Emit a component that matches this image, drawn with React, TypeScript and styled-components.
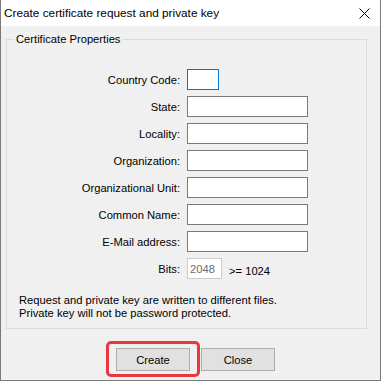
import styled, { createGlobalStyle } from 'styled-components';

const GlobalStyle = createGlobalStyle`
  html, body {
    margin: 0;
    padding: 0;
    background: #ffffff;
  }
  body {
    font-family: 'Segoe UI', 'Liberation Sans', Arial, sans-serif;
    font-size: 11.2px;
    color: #000000;
  }
`;

const fields = [
  { label: 'Country Code:', short: true, focused: true },
  { label: 'State:' },
  { label: 'Locality:' },
  { label: 'Organization:' },
  { label: 'Organizational Unit:' },
  { label: 'Common Name:' },
  { label: 'E-Mail address:' },
];

function App() {
  return (
    <>
      <GlobalStyle />
      <Window>
        <TitleBar>
          <Title>Create certificate request and private key</Title>
          <CloseGlyph aria-label="Close">
            <svg width="11" height="11" viewBox="0 0 11 11">
              <path d="M0.5 0.5 L10.5 10.5 M10.5 0.5 L0.5 10.5" stroke="#000" strokeWidth="1" fill="none" />
            </svg>
          </CloseGlyph>
        </TitleBar>

        <Body>
          <GroupBox>
            <Legend>Certificate Properties</Legend>
            <FormGrid>
              {fields.map((f) => (
                <Row key={f.label}>
                  <Label>{f.label}</Label>
                  <TextBox $short={f.short} $focused={f.focused} />
                </Row>
              ))}
              <Row>
                <Label>Bits:</Label>
                <BitsWrap>
                  <BitsBox disabled value="2048" readOnly />
                  <Hint>&gt;= 1024</Hint>
                </BitsWrap>
              </Row>
            </FormGrid>
            <Note>
              Request and private key are written to different files.
              <br />
              Private key will not be password protected.
            </Note>
          </GroupBox>

          <ButtonRow>
            <DialogButton $marked>Create</DialogButton>
            <DialogButton>Close</DialogButton>
          </ButtonRow>
        </Body>
      </Window>
    </>
  );
}

const Window = styled.div`
  width: 381px;
  height: 381px;
  box-sizing: border-box;
  border: 1px solid #7a7a7a;
  border-top: none;
  background: #f0f0f0;
  display: flex;
  flex-direction: column;
`;

const TitleBar = styled.div`
  height: 26px;
  flex: none;
  background: #ffffff;
  display: flex;
  align-items: center;
  justify-content: space-between;
  padding: 0 10px 0 3px;
`;

const Title = styled.span`
  font-size: 11.8px;
  line-height: 16px;
`;

const CloseGlyph = styled.span`
  display: flex;
  width: 11px;
  height: 11px;
  margin-top: 1px;
`;

const Body = styled.div`
  padding: 5px 13px 0 5px;
  display: flex;
  flex-direction: column;
`;

const GroupBox = styled.fieldset`
  margin: 0;
  padding: 0 0 8px 0;
  border: 1px solid #dcdcdc;
  min-width: 0;
`;

const Legend = styled.legend`
  margin-left: 7px;
  padding: 0 2px;
  line-height: 16px;
  font-size: 11.2px;
`;

const FormGrid = styled.div`
  margin-top: 22px;
  display: flex;
  flex-direction: column;
  gap: 6px;
`;

const Row = styled.div`
  display: grid;
  grid-template-columns: 173px 1fr;
  column-gap: 7px;
  align-items: center;
  height: 21px;
`;

const Label = styled.span`
  text-align: right;
  line-height: 16px;
`;

const TextBox = styled.div<{ $short?: boolean; $focused?: boolean }>`
  box-sizing: border-box;
  height: 21px;
  width: ${({ $short }) => ($short ? '32px' : '121px')};
  background: #ffffff;
  border: 1px solid ${({ $focused }) => ($focused ? '#0078d7' : '#7a7a7a')};
`;

const BitsWrap = styled.div`
  display: flex;
  align-items: center;
  gap: 7px;
`;

const BitsBox = styled.input`
  box-sizing: border-box;
  height: 21px;
  width: 35px;
  margin: 0;
  padding: 0 0 0 2px;
  background: #ffffff;
  border: 1px solid #cccccc;
  color: #6d6d6d;
  font: inherit;
  outline: none;
`;

const Hint = styled.span`
  margin-top: 4px;
`;

const Note = styled.p`
  margin: 15px 0 0 12px;
  line-height: 13px;
`;

const ButtonRow = styled.div`
  display: flex;
  gap: 11px;
  padding: 19px 0 0 110px;
`;

const DialogButton = styled.button<{ $marked?: boolean }>`
  position: relative;
  box-sizing: border-box;
  width: 74px;
  height: 23px;
  margin: 0;
  padding: 0;
  background: #e1e1e1;
  border: 1px solid #adadad;
  font: inherit;
  color: #000000;

  ${({ $marked }) =>
    $marked &&
    `
    &::after {
      content: '';
      position: absolute;
      inset: -8px -11px -7px -11px;
      border: 3px solid #e8383d;
      border-radius: 5px;
    }
  `}
`;

export default App;
